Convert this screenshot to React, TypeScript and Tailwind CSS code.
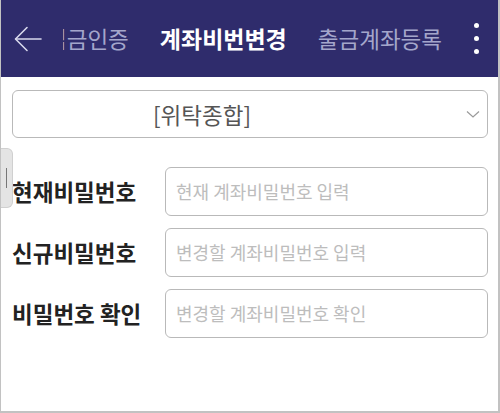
import React from "react";

const font = { fontFamily: '"Noto Sans CJK KR", "Noto Sans", sans-serif' };

function Row({ label, placeholder }: { label: string; placeholder: string }) {
  return (
    <div className="flex items-center h-[49px]">
      <div className="w-[153px] shrink-0 text-[22.5px] font-bold text-[#222] leading-none">{label}</div>
      <div className="flex-1 h-full flex items-center border border-[#b9b9b9] rounded-[6px] pl-[10px] text-[18px] text-[#bdbdbd]">
        {placeholder}
      </div>
    </div>
  );
}

export default function App() {
  return (
    <div style={font} className="relative w-[500px] h-[413px] bg-white border-l border-r-2 border-b-2 border-[#c2c2c2] overflow-hidden">
      <div className="flex items-center h-[77px] bg-[#2f2c6c]">
        <div className="w-[62px] shrink-0 flex items-center pl-[13px]">
          <svg width="28" height="26" viewBox="0 0 28 26" fill="none" stroke="#d8d8ec" strokeWidth="1.6" strokeLinecap="round" strokeLinejoin="round">
            <path d="M27 13H2" />
            <path d="M13 1.5L1.5 13L13 24.5" />
          </svg>
        </div>
        <div className="flex-1 overflow-hidden h-full flex items-center">
          <div className="flex items-center gap-[31px] ml-[-17px] whitespace-nowrap text-[22.5px] leading-none">
            <span className="text-[#a4a6cb]">입금인증</span>
            <span className="text-white font-bold text-[23px]">계좌비번변경</span>
            <span className="text-[#a4a6cb]">출금계좌등록</span>
          </div>
        </div>
        <div className="w-[40px] shrink-0 flex flex-col items-center gap-[8px] pr-[3px]">
          <span className="block w-[5px] h-[5px] rounded-full bg-white" />
          <span className="block w-[5px] h-[5px] rounded-full bg-white" />
          <span className="block w-[5px] h-[5px] rounded-full bg-white" />
        </div>
      </div>

      <div className="pl-[11px] pr-[10px] pt-[13px]">
        <div className="relative h-[48px] border border-[#b9b9b9] rounded-[6px] flex items-center pl-[140px] text-[22.5px] text-[#555] leading-none">
          [위탁종합]
          <svg className="absolute right-[7px] top-[19px]" width="14" height="9" viewBox="0 0 14 9" fill="none" stroke="#9a9a9a" strokeWidth="1.2">
            <path d="M1 1.5L7 7L13 1.5" />
          </svg>
        </div>

        <div className="mt-[29px] flex flex-col gap-[12px]">
          <Row label="현재비밀번호" placeholder="현재 계좌비밀번호 입력" />
          <Row label="신규비밀번호" placeholder="변경할 계좌비밀번호 입력" />
          <Row label="비밀번호 확인" placeholder="변경할 계좌비밀번호 확인" />
        </div>
      </div>

      <div className="absolute left-0 top-[148px] w-[12px] h-[60px] bg-[#e4e4e4] border border-l-0 border-[#d0d0d0] rounded-r-[6px] flex items-center justify-center">
        <span className="block w-[1.5px] h-[20px] bg-[#777]" />
      </div>
    </div>
  );
}
